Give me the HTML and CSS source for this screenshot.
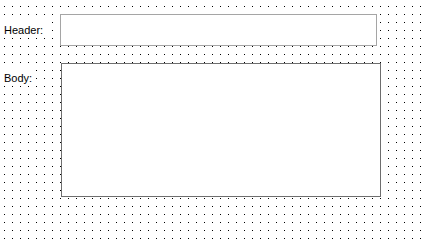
FILE: index.html
```html
<!DOCTYPE html>
<html>
<head>
<meta charset="utf-8">
<link rel="stylesheet" href="styles.css">
</head>
<body>
<div class="form">
  <div class="row row-header">
    <div class="label-cell"><span class="label">Header:</span></div>
    <div class="textbox header-box"></div>
  </div>
  <div class="row row-body">
    <div class="label-cell"><span class="label">Body:</span></div>
    <div class="textbox body-box"></div>
  </div>
</div>
</body>
</html>
```
FILE: styles.css
```css
html {
  height: 100%;
  background-color: #ffffff;
  background-image: conic-gradient(at 1px 1px, transparent 75%, #000000 0);
  background-size: 8px 8px;
  background-position: 4px 6px;
}
body {
  margin: 0;
  font-family: "Liberation Sans", Arial, sans-serif;
  font-size: 11px;
  color: #000;
}
.form {
  padding-top: 14px;
}
.row {
  display: flex;
  align-items: flex-start;
}
.label-cell {
  width: 60px;
  flex: none;
}
.label {
  display: inline-block;
  height: 16px;
  line-height: 16px;
  padding: 0 3px 0 4px;
  background: #ffffff;
}
.row-header .label {
  margin-top: 8px;
}
.row-body {
  margin-top: 17px;
}
.row-body .label {
  margin-top: 7px;
}
.textbox {
  box-sizing: border-box;
  background: #ffffff;
  flex: none;
}
.header-box {
  width: 317px;
  height: 32px;
  border: 1px solid #a5a5a5;
}
.body-box {
  margin-left: 1px;
  width: 320px;
  height: 134px;
  border: 1px solid #6e6e6e;
}
```
